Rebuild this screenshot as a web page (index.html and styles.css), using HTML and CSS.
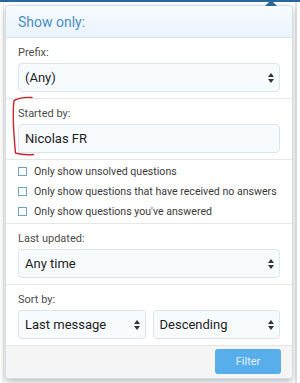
FILE: index.html
```html
<!DOCTYPE html>
<html>
<head>
<meta name="viewport" content="width=device-width, initial-scale=1">
<link rel="stylesheet" href="styles.css">
</head>
<body>

<div class="topbar"></div>

<div class="page">
  <div class="menu">
    <span class="arrow"></span>
    <h3 class="menu-header">Show only:</h3>

    <div class="menu-row">
      <div class="label">Prefix:</div>
      <div class="field select">
        <span>(Any)</span>
        <svg class="caret" width="6" height="10" viewBox="0 0 6 10"><path d="M3 0L6 4H0Z M3 10L0 6H6Z" fill="#333"/></svg>
      </div>
    </div>

    <div class="menu-row">
      <div class="label">Started by:</div>
      <div class="field">Nicolas FR</div>
      <!-- red mark drawn over the screenshot -->
      <svg class="mark" width="26" height="62" viewBox="0 0 26 62">
        <path d="M22 1.5C16 1 9 2 4 4.5C2.5 16 3.5 36 5.5 57C10 58.5 16 59 23.5 58.5" fill="none" stroke="#c9252c" stroke-width="1.4" stroke-linecap="round"/>
      </svg>
    </div>

    <ul class="checks">
      <li><span class="box"></span>Only show unsolved questions</li>
      <li><span class="box"></span>Only show questions that have received no answers</li>
      <li><span class="box"></span>Only show questions you've answered</li>
    </ul>

    <div class="menu-row">
      <div class="label">Last updated:</div>
      <div class="field select">
        <span>Any time</span>
        <svg class="caret" width="6" height="10" viewBox="0 0 6 10"><path d="M3 0L6 4H0Z M3 10L0 6H6Z" fill="#333"/></svg>
      </div>
    </div>

    <div class="menu-row">
      <div class="label">Sort by:</div>
      <div class="pair">
        <div class="field select">
          <span>Last message</span>
          <svg class="caret" width="6" height="10" viewBox="0 0 6 10"><path d="M3 0L6 4H0Z M3 10L0 6H6Z" fill="#333"/></svg>
        </div>
        <div class="field select">
          <span>Descending</span>
          <svg class="caret" width="6" height="10" viewBox="0 0 6 10"><path d="M3 0L6 4H0Z M3 10L0 6H6Z" fill="#333"/></svg>
        </div>
      </div>
    </div>

    <div class="menu-footer">
      <span class="btn">Filter</span>
    </div>
  </div>
</div>

</body>
</html>
```

FILE: styles.css
```css
* {
  box-sizing: border-box;
}

body {
  margin: 0;
  background: #fff;
  font-family: Roboto, "Noto Sans", sans-serif;
  color: #141414;
}

/* Dark strip of the page behind the menu */
.topbar {
  height: 2px;
  background: #2b679b;
}

.page {
  padding: 3px 7px 0 5px;
  background: linear-gradient(to right, #fff 0, #fff 3px, #ececec 3px, #ececec 4px, #fff 4px, #fff 295px, #e2e2e2 295px, #e2e2e2 297px, #fff 297px);
  min-height: 381px;
}

/* The popup */
.menu {
  position: relative;
  background: #fff;
  border: 1px solid #d3dee8;
  border-radius: 4px;
  box-shadow: 0 3px 6px rgba(0, 0, 0, 0.25);
}

.arrow {
  position: absolute;
  top: -6px;
  right: 15px;
  width: 0;
  height: 0;
  border-left: 6px solid transparent;
  border-right: 6px solid transparent;
  border-bottom: 6px solid #2b679b;
}

.menu-header {
  margin: 0;
  height: 32px;
  padding: 0 12px;
  line-height: 33px;
  font-size: 14px;
  font-weight: normal;
  color: #4a8dc4;
  background: linear-gradient(to bottom, #f7fbfe, #e9f4fd);
  border-bottom: 1px solid #dbe4ec;
  border-radius: 4px 4px 0 0;
}

.menu-row {
  position: relative;
  padding: 7px 12px 6px;
  border-bottom: 1px solid #e6e6e6;
}

.label {
  height: 15px;
  line-height: 15px;
  margin-bottom: 3px;
  font-size: 11px;
  color: #4d4d4d;
}

.field {
  display: flex;
  align-items: center;
  height: 29px;
  padding: 0 6px;
  font-size: 13px;
  color: #1d1d1d;
  white-space: nowrap;
  background: #f7fbfe;
  border: 1px solid #dde5ec;
  border-radius: 4px;
}

.select span {
  flex: 1;
}

.caret {
  margin-right: -1px;
}

.pair {
  display: flex;
  gap: 7px;
}

.pair .field {
  flex: 1;
}

.mark {
  position: absolute;
  left: 4px;
  top: -3px;
}

/* Checkbox list */
.checks {
  margin: 0;
  padding: 1px 12px 2px;
  list-style: none;
  border-bottom: 1px solid #e6e6e6;
}

.checks li {
  display: flex;
  align-items: center;
  height: 20px;
  font-size: 10.6px;
  color: #3a3a3a;
  white-space: nowrap;
}

.box {
  flex-shrink: 0;
  width: 9px;
  height: 9px;
  margin-right: 7px;
  border: 1px solid #6fa3c6;
  background: #fff;
}

/* Footer with the button */
.menu-footer {
  display: flex;
  justify-content: flex-end;
  padding: 3px 11px 4px;
  background: #f5f5f5;
  border-radius: 0 0 4px 4px;
}

.btn {
  width: 66px;
  height: 25px;
  line-height: 25px;
  text-align: center;
  font-size: 11px;
  color: #e3f1fc;
  background: #57aeea;
  border-radius: 3px;
}
```
